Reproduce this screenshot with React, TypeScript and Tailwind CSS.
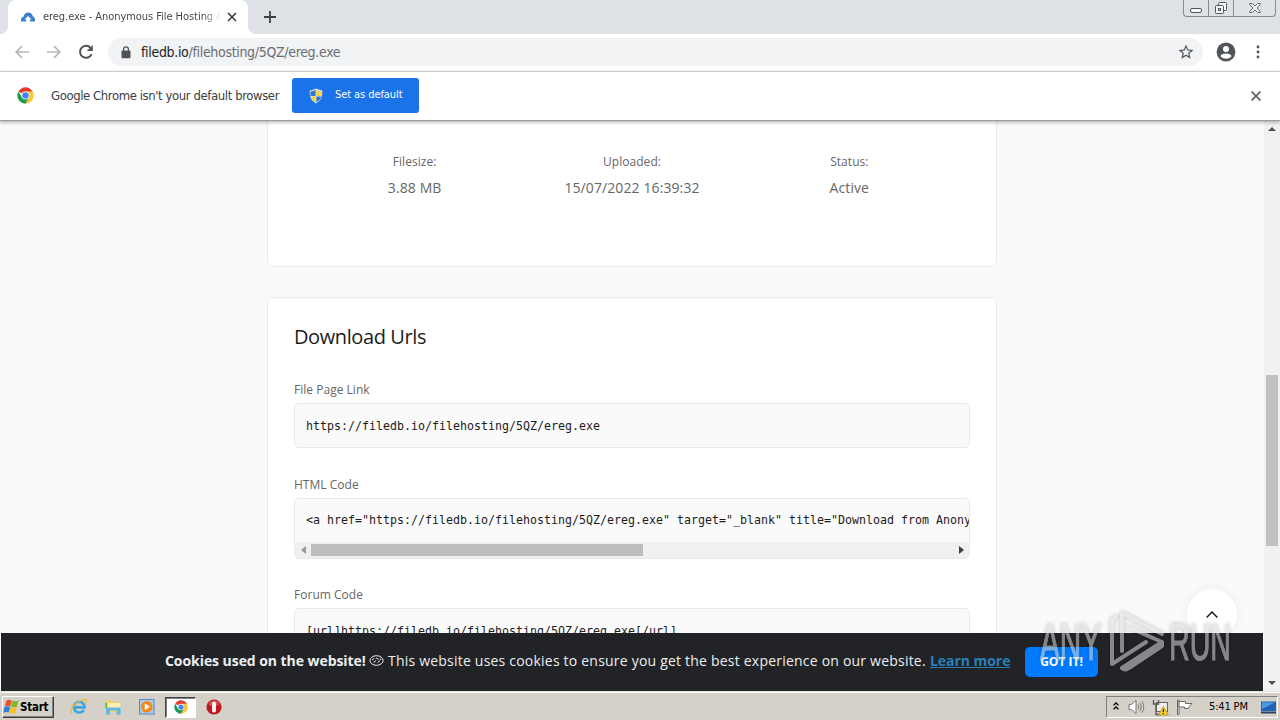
import type { ReactNode } from "react";

const FILE_URL = "https://filedb.io/filehosting/5QZ/ereg.exe";

const INFO = [
  { label: "Filesize:", value: "3.88 MB" },
  { label: "Uploaded:", value: "15/07/2022 16:39:32" },
  { label: "Status:", value: "Active" },
];

function ChromeLogo({ className }: { className?: string }) {
  return (
    <svg viewBox="0 0 48 48" className={className}>
      <path d="M24 24 L4.1 12.5 A23 23 0 0 1 43.9 12.5 L44 14 H24 Z" fill="#e33b2e" />
      <path d="M24 13 H44.2 A23 23 0 0 1 24 47 L34 29.7 Z" fill="#fcc934" />
      <path d="M4.1 12.5 L14 29.7 L34 29.7 L24 47 A23 23 0 0 1 4.1 12.5 Z" fill="#1e9a50" />
      <circle cx="24" cy="24" r="11" fill="#fff" />
      <circle cx="24" cy="24" r="9" fill="#4285f4" />
    </svg>
  );
}

function TabStrip() {
  return (
    <div className="flex h-[34px] shrink-0 items-start bg-[#dee1e6]">
      <div className="flex h-2 w-2 shrink-0 self-end bg-white">
        <div className="h-2 w-2 rounded-br-lg bg-[#dee1e6]" />
      </div>
      <div className="flex h-[34px] w-60 items-center rounded-t-lg bg-white pl-3">
        <svg viewBox="0 0 16 16" className="h-4 w-4 shrink-0">
          <path d="M1 12.5 Q0.4 8.6 3.6 7.6 Q4.6 3.4 8.4 3.4 Q12 3.4 12.8 7.2 Q15.6 8.4 15 12.5 H9.8 V10.4 H11.6 L8 7 L4.6 10.4 H6.2 V12.5 Z" fill="#3f7fd0" />
        </svg>
        <div className="ml-[7px] w-[178px] overflow-hidden bg-gradient-to-r from-[#3c4043] from-90% to-transparent to-100% bg-clip-text text-[11px] tracking-[-0.05px] whitespace-nowrap text-transparent">
          ereg.exe - Anonymous File Hosting &amp;
        </div>
        <svg viewBox="0 0 10 10" className="ml-[6px] h-[10px] w-[10px] shrink-0" stroke="#3c4043" strokeWidth="1.7">
          <path d="M1 1 L9 9 M9 1 L1 9" />
        </svg>
      </div>
      <div className="flex h-2 w-2 shrink-0 self-end bg-white">
        <div className="h-2 w-2 rounded-bl-lg bg-[#dee1e6]" />
      </div>
      <svg viewBox="0 0 12 12" className="mt-[11px] ml-2 h-3 w-3" stroke="#3c4043" strokeWidth="1.8">
        <path d="M6 0 V12 M0 6 H12" />
      </svg>
      <div className="mr-[4px] ml-auto flex h-[17px] w-[93px] rounded-b-[4px] border border-t-0 border-[#858a93]">
        <div className="flex w-[25px] items-center justify-center border-r border-[#858a93] pt-1">
          <div className="h-[5px] w-3 rounded-[2px] border border-[#50555e] bg-[#f4f5f7]" />
        </div>
        <div className="flex w-[25px] items-center justify-center border-r border-[#858a93]">
          <svg viewBox="0 0 14 14" className="h-[14px] w-[14px]" fill="#f4f5f7" stroke="#50555e">
            <rect x="4.5" y="1.5" width="8" height="8" rx="1" />
            <rect x="1.5" y="4.5" width="8" height="8" rx="1" />
            <rect x="4.5" y="7.5" width="2" height="2" />
          </svg>
        </div>
        <div className="flex flex-1 items-center justify-center">
          <svg viewBox="0 0 12 10" className="h-[10px] w-3" fill="#f4f5f7" stroke="#50555e" strokeWidth="0.9">
            <path d="M0.6 0.6 H3.4 L6 3.2 L8.6 0.6 H11.4 V1.4 L8 5 L11.4 8.6 V9.4 H8.6 L6 6.8 L3.4 9.4 H0.6 V8.6 L4 5 L0.6 1.4 Z" />
          </svg>
        </div>
      </div>
    </div>
  );
}

function Toolbar() {
  return (
    <div className="flex h-[38px] shrink-0 items-center border-b border-[#dcdde0] bg-white pb-px">
      <svg viewBox="0 0 14 14" className="ml-[15px] h-[14px] w-[14px]" fill="none" stroke="#b4b6b9" strokeWidth="1.7">
        <path d="M14 7 H1.5 M7 1 L1.2 7 L7 13" />
      </svg>
      <svg viewBox="0 0 14 14" className="ml-[18px] h-[14px] w-[14px]" fill="none" stroke="#b4b6b9" strokeWidth="1.7">
        <path d="M0 7 H12.5 M7 1 L12.8 7 L7 13" />
      </svg>
      <svg viewBox="0 0 16 16" className="ml-[17px] h-4 w-4" fill="none" stroke="#505357" strokeWidth="2">
        <path d="M13.6 10.2 A6 6 0 1 1 12.6 3.9" />
        <path d="M14.8 1 V7 H8.8 Z" fill="#505357" stroke="none" />
      </svg>
      <div className="ml-[14px] flex h-7 w-[1095px] items-center rounded-full bg-[#f1f3f4] pl-[13px]">
        <svg viewBox="0 0 10 13" className="h-[13px] w-[10px]">
          <rect x="0.5" y="4.6" width="9" height="7.6" rx="1" fill="#505357" />
          <path d="M2.6 5 V3.2 A2.4 2.4 0 0 1 7.4 3.2 V5" fill="none" stroke="#505357" strokeWidth="1.3" />
        </svg>
        <span className="ml-[10px] text-[14px] tracking-[-0.32px] text-[#6a6e73]">
          <span className="text-[#202124]">filedb.io</span>/filehosting/5QZ/ereg.exe
        </span>
        <svg viewBox="0 0 24 24" className="mr-[8px] ml-auto h-[18px] w-[18px]" fill="#505357">
          <path d="M22 9.24l-7.19-.62L12 2 9.19 8.63 2 9.24l5.46 4.73L5.82 21 12 17.27 18.18 21l-1.63-7.03L22 9.24zM12 15.4l-3.76 2.27 1-4.28-3.32-2.88 4.38-.38L12 6.1l1.71 4.04 4.38.38-3.32 2.88 1 4.28L12 15.4z" />
        </svg>
      </div>
      <svg viewBox="0 0 20 20" className="ml-[13px] h-5 w-5">
        <circle cx="10" cy="10" r="9.4" fill="#505357" />
        <circle cx="10" cy="7" r="3" fill="#fff" />
        <path d="M4.4 14.2 Q5.4 11.4 10 11.4 Q14.6 11.4 15.6 14.2 Q13.4 16.8 10 16.8 Q6.6 16.8 4.4 14.2 Z" fill="#fff" />
      </svg>
      <svg viewBox="0 0 4 14" className="ml-5 h-[14px] w-1" fill="#505357">
        <circle cx="2" cy="2" r="1.4" />
        <circle cx="2" cy="7" r="1.4" />
        <circle cx="2" cy="12" r="1.4" />
      </svg>
    </div>
  );
}

function DefaultBrowserBar() {
  return (
    <div className="relative z-10 flex h-[49px] shrink-0 items-center border-b border-[#9b9b9b] bg-white pb-px shadow-[0_1px_4px_rgba(0,0,0,0.35)]">
      <ChromeLogo className="ml-[17px] h-[17px] w-[17px]" />
      <span className="ml-[17px] w-[228px] text-[13px] tracking-[-0.41px] whitespace-nowrap text-[#3c4043]">
        Google Chrome isn't your default browser
      </span>
      <div className="ml-[13px] flex h-[35px] w-[127px] items-center rounded-[3px] bg-[#1a73e8] pl-[17px]">
        <svg viewBox="0 0 14 16" className="h-4 w-[14px]">
          <path d="M7 0.6 Q10 2.4 13.4 2.4 Q13.8 12 7 15.4 Q0.2 12 0.6 2.4 Q4 2.4 7 0.6 Z" fill="#d9e3ee" />
          <path d="M6.6 2 V8 H1.6 Q1.3 5.5 1.6 3.2 Q4.4 3.2 6.6 2 Z" fill="#2e77c9" />
          <path d="M7.4 2 V8 H12.4 Q12.7 5.5 12.4 3.2 Q9.6 3.2 7.4 2 Z" fill="#f5d33b" />
          <path d="M6.6 8.4 V14.2 Q2.6 12 1.8 8.4 Z" fill="#f5d33b" />
          <path d="M7.4 8.4 V14.2 Q11.4 12 12.2 8.4 Z" fill="#2e77c9" />
        </svg>
        <span className="ml-[12px] text-[11px] tracking-[-0.08px] whitespace-nowrap text-white">Set as default</span>
      </div>
      <svg viewBox="0 0 10 10" className="mt-px mr-[19px] ml-auto h-[10px] w-[10px]" stroke="#5f6368" strokeWidth="1.8">
        <path d="M0.5 0.5 L9.5 9.5 M9.5 0.5 L0.5 9.5" />
      </svg>
    </div>
  );
}

function CodeField({ label, className, children }: { label: string; className: string; children: ReactNode }) {
  return (
    <div>
      <div className="h-[21px] text-[12px] leading-4 tracking-[0.02px] text-[#666]">{label}</div>
      <div className={`overflow-hidden rounded-[5px] border border-[#e9e9e9] bg-[#fafafa] ${className}`}>{children}</div>
    </div>
  );
}

function Code({ children }: { children: ReactNode }) {
  return (
    <div className="pl-[11px] font-['DejaVu_Sans_Mono',monospace] text-[11.63px] leading-4 whitespace-pre text-[#1c1c1c]">
      {children}
    </div>
  );
}

function PageContent() {
  return (
    <div className="flex h-full flex-col items-center bg-[#fafafa] font-['Open_Sans',sans-serif]">
      <div className="flex h-[146px] w-[730px] shrink-0 rounded-b-[5px] border border-t-0 border-[#ebebeb] bg-white px-[38px] pt-[33px]">
        {INFO.map((item) => (
          <div key={item.label} className="flex flex-1 flex-col items-center text-[#666]">
            <span className="text-[12px] leading-4 tracking-[0.05px]">{item.label}</span>
            <span className="mt-[8px] text-[14px] leading-5 tracking-[0.1px]">{item.value}</span>
          </div>
        ))}
      </div>
      <div className="mt-[30px] h-[420px] w-[730px] shrink-0 rounded-[5px] border border-[#ebebeb] bg-white px-[26px] pt-[25px]">
        <h2 className="h-[59px] text-[20px] leading-7 tracking-[-0.4px] text-[#1c1c1c]">Download Urls</h2>
        <div className="flex flex-col">
          <CodeField label="File Page Link" className="mb-[29px] h-[45px] pt-[14px]">
            <Code>{FILE_URL}</Code>
          </CodeField>
          <CodeField label="HTML Code" className="mb-[28px] flex h-[61px] flex-col justify-between pt-[13px]">
            <Code>{`<a href="${FILE_URL}" target="_blank" title="Download from Anonymous File Hosting">`}</Code>
            <div className="flex h-4 shrink-0 items-center bg-[#f0f0f0]">
              <svg viewBox="0 0 5 8" className="ml-[6px] h-2 w-[5px]" fill="#989898">
                <path d="M5 0 V8 L0 4 Z" />
              </svg>
              <div className="ml-[5px] h-3 w-[332px] bg-[#bdbdbd]" />
              <svg viewBox="0 0 5 8" className="mr-[5px] ml-auto h-2 w-[5px]" fill="#404040">
                <path d="M0 0 V8 L5 4 Z" />
              </svg>
            </div>
          </CodeField>
          <CodeField label="Forum Code" className="h-[45px] pt-[14px]">
            <Code>{`[url]${FILE_URL}[/url]`}</Code>
          </CodeField>
        </div>
      </div>
    </div>
  );
}

function CookieBar() {
  return (
    <div className="absolute bottom-0 left-px flex h-[58px] w-[1262px] items-center bg-[#212327] pb-[3px] pl-[164px] font-['Open_Sans',sans-serif] text-[14px] text-[#eceef0]">
      <span className="w-[201px] font-bold tracking-[-0.06px] whitespace-nowrap">Cookies used on the website!</span>
      <svg viewBox="0 0 15 11" className="ml-[3px] h-[11px] w-[15px]" fill="none" stroke="#eceef0">
        <ellipse cx="7.5" cy="5.5" rx="6.6" ry="4.8" />
        <path d="M3 5 L5.5 3.2 M7 2.8 L9.5 4.5 M4.5 7.5 L7 5.6 M8.5 7.6 L11 5.6 M11.2 3.4 L12 5" />
      </svg>
      <span className="ml-[4px] w-[537px] tracking-[0.21px] whitespace-nowrap">
        This website uses cookies to ensure you get the best experience on our website.
      </span>
      <a className="ml-[5px] w-[80px] font-bold tracking-[-0.05px] whitespace-nowrap text-[#2a80b9] underline">Learn more</a>
      <button className="mt-[3px] ml-[15px] h-[30px] w-[73px] rounded-[5px] bg-[#007bff] text-[12px] font-bold text-white">
        GOT IT!
      </button>
    </div>
  );
}

function Watermark() {
  return (
    <svg viewBox="0 0 210 80" className="absolute top-[480px] left-[1030px] h-20 w-[210px] opacity-55 drop-shadow-[0_0_2px_rgba(0,0,0,0.45)]">
      <g fill="#d8d8d8" stroke="#d8d8d8" strokeWidth="1.2" fontFamily="'Liberation Sans Narrow', 'Liberation Sans', sans-serif" fontSize="51">
        <text x="10" y="59" textLength="61" lengthAdjust="spacingAndGlyphs">ANY</text>
        <text x="139" y="59" textLength="62" lengthAdjust="spacingAndGlyphs">RUN</text>
      </g>
      <g fill="none" stroke="#dcdcdc" strokeWidth="4" strokeLinejoin="round" strokeLinecap="round">
        <path d="M86 16 L82 19 V63 L116 41" />
        <path d="M92 50 V12 L132 33" />
        <path d="M98 26 L132 41 L92 67 Q95 70 99 67 L132 45 V41" />
      </g>
    </svg>
  );
}

function PageScrollbar() {
  return (
    <div className="flex w-4 shrink-0 flex-col items-center bg-[#f1f1f1]">
      <svg viewBox="0 0 8 4" className="mt-[6px] h-1 w-2" fill="#505050">
        <path d="M0 4 L4 0 L8 4 Z" />
      </svg>
      <div className="mt-[244px] h-[171px] w-[12px] bg-[#c1c1c1]" />
      <svg viewBox="0 0 8 4" className="mt-auto mb-[6px] h-1 w-2" fill="#505050">
        <path d="M0 0 L4 4 L8 0 Z" />
      </svg>
    </div>
  );
}

function WindowsFlag() {
  return (
    <svg viewBox="0 0 16 16" className="h-4 w-4">
      <path d="M3.4 1.6 Q6 0.2 8.6 1.4 L7.4 7.2 Q4.8 6 1.8 7.4 Z" fill="#e8502a" />
      <path d="M9.2 1.8 Q11.6 3 15.6 1.4 L14 7.4 Q10.6 8.8 8 7.6 Z" fill="#7db928" />
      <path d="M1.6 8 Q4.6 6.8 7.2 7.8 L5.8 13.6 Q3.4 12.4 0.2 13.8 Z" fill="#2f7fd6" />
      <path d="M7.8 8.2 Q10.4 9.4 13.8 8 L12.2 13.8 Q9.2 15.2 6.4 14 Z" fill="#fbbe1e" />
    </svg>
  );
}

function Taskbar() {
  return (
    <div className="flex h-7 shrink-0 items-center border-t border-white bg-[#d5d0c8] pt-px font-['DejaVu_Sans_Condensed','DejaVu_Sans',sans-serif]">
      <div className="ml-[2px] flex h-[22px] w-[52px] items-center border border-t-white border-r-[#404040] border-b-[#404040] border-l-white shadow-[inset_-1px_-1px_0_#808080]">
        <WindowsFlag />
        <span className="mt-px ml-px text-[11.5px] font-bold tracking-[-0.25px] text-black">Start</span>
      </div>
      <svg viewBox="0 0 18 18" className="ml-[16px] h-[18px] w-[18px]" fill="none">
        <path d="M13.8 12 A5.4 5.4 0 1 1 14.6 9.4 H4.4" stroke="#3ba5e3" strokeWidth="2.6" />
        <path d="M1.8 16 Q-1 12 5.4 6 Q13 -0.4 16.2 2 Q17.2 3 15.6 5.4" stroke="#e9bd35" strokeWidth="1.2" />
      </svg>
      <svg viewBox="0 0 18 18" className="ml-4 h-[18px] w-[18px]">
        <path d="M2 2 H7 L8 3.6 H15.4 V14 H2 Z" fill="#efd074" />
        <path d="M4 5 H16.4 V10 H4 Z" fill="#fbeeb0" />
        <path d="M2 9.4 H16.6 V16.4 H12.6 V12.6 H6 V16.4 H2 Z" fill="#62b8e2" />
        <path d="M1.2 4.4 H3 V10 H1.2 Z" fill="#7cb95b" />
      </svg>
      <svg viewBox="0 0 18 18" className="ml-4 h-[18px] w-[18px]">
        <rect x="1.5" y="1.5" width="14.5" height="14.5" fill="#a9cbed" stroke="#5589c4" />
        <circle cx="8.8" cy="8.8" r="5.8" fill="#f08a1c" />
        <path d="M6.8 5.6 V12 L12.2 8.8 Z" fill="#fff" />
      </svg>
      <div className="ml-[9px] flex h-[21px] w-[31px] items-center justify-center border border-t-[#404040] border-r-white border-b-white border-l-[#404040] bg-white shadow-[inset_1px_1px_0_#808080]">
        <ChromeLogo className="h-[14px] w-[14px]" />
      </div>
      <svg viewBox="0 0 16 16" className="ml-[10px] h-4 w-4">
        <circle cx="8" cy="8" r="7.6" fill="#bd1a1f" />
        <ellipse cx="8" cy="4.4" rx="5.4" ry="3" fill="#d24a4a" />
        <rect x="6" y="2.6" width="4" height="10.8" rx="2" fill="#f6eeee" />
      </svg>
      <div className="mr-[2px] ml-auto flex h-[22px] w-[172px] items-center border border-t-[#808080] border-r-white border-b-white border-l-[#808080]">
        <svg viewBox="0 0 6 8" className="mb-[3px] ml-[6px] h-2 w-[6px]" fill="none" stroke="#000" strokeWidth="1.3">
          <path d="M0.5 3.4 L3 1 L5.5 3.4 M0.5 7.4 L3 5 L5.5 7.4" />
        </svg>
        <svg viewBox="0 0 17 16" className="ml-[9px] h-4 w-[17px]" stroke="#777">
          <path d="M1 5.4 H3.6 L8 1.4 V14.6 L3.6 10.6 H1 Z" fill="#fff" />
          <path d="M10 5.6 Q11.6 8 10 10.4 M12 3.8 Q14.8 8 12 12.2 M14 2.4 Q17.6 8 14 13.6" fill="none" />
        </svg>
        <svg viewBox="0 0 17 17" className="ml-[7px] h-[17px] w-[17px]">
          <rect x="4.5" y="3.5" width="11" height="9" fill="#efefe8" stroke="#666" />
          <path d="M1.5 1 V5 H6.5 V1 M4 5 V15.5 H9" fill="none" stroke="#555" strokeWidth="1.3" />
          <path d="M11.4 7.4 L16.4 16 H6.6 Z" fill="#f7cf2b" stroke="#b08a10" strokeWidth="0.7" />
          <path d="M11.4 10 V13 M11.4 14 V15" stroke="#222" strokeWidth="1.2" />
        </svg>
        <svg viewBox="0 0 17 16" className="ml-[7px] h-4 w-[17px]" fill="#fff" stroke="#6a6a6a">
          <path d="M1.5 1 H3 V15.5 H1.5 Z" />
          <path d="M3 2.5 H9.5 V4.5 H16 L13.5 7.2 L12.5 9.5 H8.5 V8 H3 Z" />
        </svg>
        <span className="mt-px ml-[16px] w-[40px] text-[11px] tracking-[-0.15px] whitespace-nowrap text-black">5:41 PM</span>
        <svg viewBox="0 0 15 13" className="mr-px ml-auto h-[13px] w-[15px]">
          <rect x="0" y="0.5" width="15" height="9.5" fill="#2262b5" />
          <path d="M1 1.5 H14 L1 8 Z" fill="#4c9be6" />
          <rect x="0" y="10.5" width="15" height="2" fill="#28425f" />
        </svg>
      </div>
    </div>
  );
}

export default function App() {
  return (
    <div className="flex h-[720px] w-[1280px] flex-col overflow-hidden bg-white font-['DejaVu_Sans_Condensed','DejaVu_Sans',sans-serif]">
      <TabStrip />
      <Toolbar />
      <DefaultBrowserBar />
      <div className="relative flex h-[570px] shrink-0">
        <div className="min-w-0 flex-1 overflow-hidden">
          <PageContent />
        </div>
        <PageScrollbar />
        {/* Back to top */}
        <div className="absolute top-[468px] left-[1187px] flex h-[50px] w-[50px] items-center justify-center rounded-full bg-white shadow-[0_0_12px_rgba(0,0,0,0.06)]">
          <svg viewBox="0 0 12 7" className="h-[7px] w-3" fill="none" stroke="#111" strokeWidth="1.4">
            <path d="M0.6 6.4 L6 1 L11.4 6.4" />
          </svg>
        </div>
        <CookieBar />
        <Watermark />
      </div>
      <div className="h-px shrink-0 bg-[#e4e2de]" />
      <Taskbar />
    </div>
  );
}
